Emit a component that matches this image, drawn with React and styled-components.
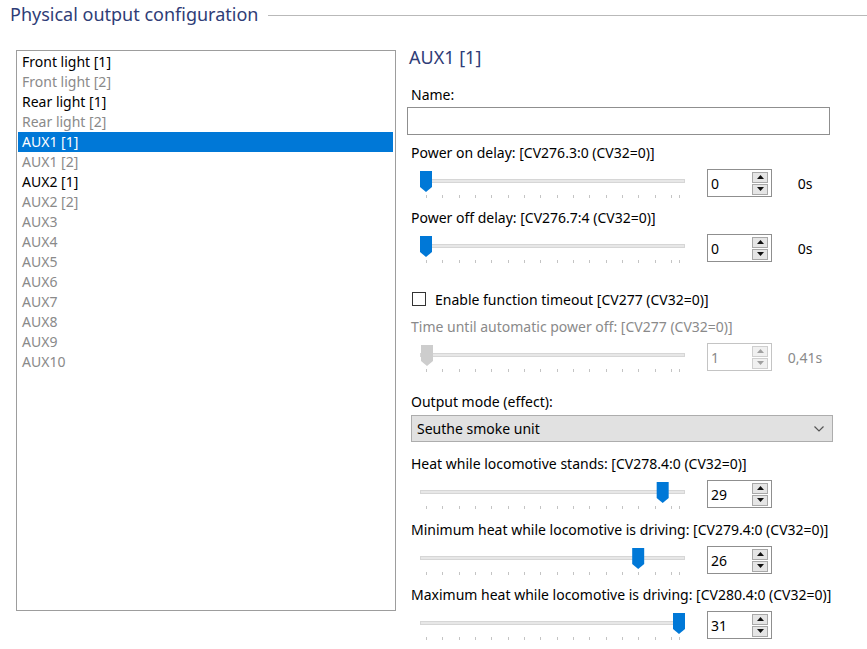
import React from 'react';
import styled, { createGlobalStyle } from 'styled-components';

const GlobalStyle = createGlobalStyle`
  html, body {
    margin: 0;
    padding: 0;
    background: #fff;
  }
  body {
    font-family: 'Noto Sans', 'Open Sans', sans-serif;
    font-size: 14px;
    color: #000;
  }
`;

const Page = styled.div`
  width: 867px;
  height: 649px;
  overflow: hidden;
`;

const TitleRow = styled.div`
  display: flex;
  align-items: center;
  height: 24px;
  padding: 2px 0 0 10px;
`;

const TitleText = styled.div`
  font-size: 18px;
  line-height: 24px;
  color: #2f3d77;
  white-space: nowrap;
`;

const TitleRule = styled.div`
  flex: 1;
  height: 1px;
  margin-left: 10px;
  margin-top: 2px;
  background: #b9b9b9;
`;

const Content = styled.div`
  display: flex;
  align-items: flex-start;
  margin-top: 20px;
  padding-left: 16px;
`;

const ListBox = styled.div`
  box-sizing: border-box;
  width: 380px;
  height: 561px;
  margin-top: 4px;
  border: 1px solid #9d9d9d;
  padding: 1px 2px 1px 1px;
`;

const ListItem = styled.div`
  height: 20px;
  line-height: 20px;
  padding-left: 4px;
  white-space: nowrap;
  color: ${(p) => (p.selected ? '#fff' : p.active ? '#000' : '#8a8a8a')};
  background: ${(p) => (p.selected ? '#0078d7' : 'transparent')};
`;

const Panel = styled.div`
  display: flex;
  flex-direction: column;
  margin-left: 11px;
  width: 440px;
`;

const Heading = styled.div`
  font-size: 18px;
  line-height: 22px;
  color: #2f3d77;
  padding-left: 2px;
`;

const Label = styled.div`
  line-height: 20px;
  height: 20px;
  padding-left: 4px;
  white-space: nowrap;
  margin-top: ${(p) => p.$mt || 0}px;
  color: ${(p) => (p.disabled ? '#8a8a8a' : '#000')};
`;

const TextInput = styled.div`
  box-sizing: border-box;
  width: 423px;
  height: 28px;
  margin-top: 2px;
  border: 1px solid #8f8f8f;
  background: #fff;
`;

const Row = styled.div`
  display: flex;
  align-items: center;
  height: 30px;
  margin-top: 5px;
  padding-left: 4px;
`;

const SliderSvg = styled.svg`
  display: block;
  flex: 0 0 284px;
`;

const Spin = styled.div`
  box-sizing: border-box;
  display: flex;
  align-items: center;
  justify-content: space-between;
  width: 65px;
  height: 28px;
  margin-left: 12px;
  border: 1px solid ${(p) => (p.disabled ? '#c4c4c4' : '#8f8f8f')};
  padding: 0 3px 0 3px;
  color: ${(p) => (p.disabled ? '#8a8a8a' : '#000')};
  background: #fff;
`;

const SpinButtons = styled.div`
  display: flex;
  flex-direction: column;
  gap: 1px;
`;

const SpinButton = styled.div`
  box-sizing: border-box;
  width: 16px;
  height: 11px;
  display: flex;
  align-items: center;
  justify-content: center;
  border: 1px solid ${(p) => (p.disabled ? '#cfcfcf' : '#a8a8a8')};
  background: ${(p) => (p.disabled ? '#f0f0f0' : '#e5e5e5')};
`;

const Unit = styled.div`
  width: 66px;
  text-align: center;
  color: ${(p) => (p.disabled ? '#8a8a8a' : '#000')};
`;

const CheckRow = styled.label`
  display: flex;
  align-items: center;
  height: 20px;
  margin-top: 26px;
  padding-left: 5px;
`;

const CheckBox = styled.span`
  box-sizing: border-box;
  width: 14px;
  height: 14px;
  border: 1px solid #333;
  background: #fff;
  margin-right: 9px;
`;

const Select = styled.div`
  box-sizing: border-box;
  display: flex;
  align-items: center;
  justify-content: space-between;
  width: 422px;
  height: 27px;
  margin: 3px 0 0 4px;
  padding: 0 8px 0 5px;
  border: 1px solid #adadad;
  background: #e1e1e1;
`;

const items = [
  ['Front light [1]', true],
  ['Front light [2]', false],
  ['Rear light [1]', true],
  ['Rear light [2]', false],
  ['AUX1 [1]', true, true],
  ['AUX1 [2]', false],
  ['AUX2 [1]', true],
  ['AUX2 [2]', false],
  ['AUX3', false],
  ['AUX4', false],
  ['AUX5', false],
  ['AUX6', false],
  ['AUX7', false],
  ['AUX8', false],
  ['AUX9', false],
  ['AUX10', false],
];

const ticks = [];
for (let i = 0; i <= 15; i++) ticks.push(15 + (i * 2 * 253) / 31);
ticks.push(268);

const Slider = ({ value, max = 31, disabled }) => {
  const cx = 15 + (value / max) * 253;
  const thumb = disabled ? '#cdcdcd' : '#0078d7';
  return (
    <SliderSvg width="284" height="30" viewBox="0 0 284 30">
      <rect x="9.5" y="11.5" width="264" height="3" fill="#e7e7e7" stroke="#d6d6d6" />
      {ticks.map((x, i) => (
        <line key={i} x1={Math.round(x) + 0.5} x2={Math.round(x) + 0.5} y1="27" y2="31" stroke="#c4c4c4" />
      ))}
      <polygon
        points={`${cx - 6},3 ${cx + 6},3 ${cx + 6},19 ${cx},24 ${cx - 6},19`}
        fill={thumb}
      />
    </SliderSvg>
  );
};

const Arrow = ({ up, disabled }) => (
  <svg width="7" height="4" viewBox="0 0 7 4">
    <polygon points={up ? '0,4 7,4 3.5,0' : '0,0 7,0 3.5,4'} fill={disabled ? '#a0a0a0' : '#111'} />
  </svg>
);

const SpinBox = ({ value, disabled }) => (
  <Spin disabled={disabled}>
    <span>{value}</span>
    <SpinButtons>
      <SpinButton disabled={disabled}>
        <Arrow up disabled={disabled} />
      </SpinButton>
      <SpinButton disabled={disabled}>
        <Arrow disabled={disabled} />
      </SpinButton>
    </SpinButtons>
  </Spin>
);

const SliderRow = ({ value, max, spin, unit, disabled }) => (
  <Row>
    <Slider value={value} max={max} disabled={disabled} />
    <SpinBox value={spin} disabled={disabled} />
    {unit && <Unit disabled={disabled}>{unit}</Unit>}
  </Row>
);

export default function App() {
  return (
    <Page>
      <GlobalStyle />
      <TitleRow>
        <TitleText>Physical output configuration</TitleText>
        <TitleRule />
      </TitleRow>
      <Content>
        <ListBox>
          {items.map(([name, active, selected]) => (
            <ListItem key={name} active={active} selected={selected}>
              {name}
            </ListItem>
          ))}
        </ListBox>
        <Panel>
          <Heading>AUX1 [1]</Heading>
          <Label $mt={17}>Name:</Label>
          <TextInput />
          <Label $mt={8}>Power on delay: [CV276.3:0 (CV32=0)]</Label>
          <SliderRow value={0} spin="0" unit="0s" />
          <Label $mt={10}>Power off delay: [CV276.7:4 (CV32=0)]</Label>
          <SliderRow value={0} spin="0" unit="0s" />
          <CheckRow>
            <CheckBox />
            Enable function timeout [CV277 (CV32=0)]
          </CheckRow>
          <Label $mt={8} disabled>
            Time until automatic power off: [CV277 (CV32=0)]
          </Label>
          <SliderRow value={1} max={255} spin="1" unit="0,41s" disabled />
          <Label $mt={20}>Output mode (effect):</Label>
          <Select>
            <span>Seuthe smoke unit</span>
            <svg width="10" height="6" viewBox="0 0 10 6">
              <polyline points="0.5,0.5 5,5 9.5,0.5" fill="none" stroke="#555" strokeWidth="1.2" />
            </svg>
          </Select>
          <Label $mt={12}>Heat while locomotive stands: [CV278.4:0 (CV32=0)]</Label>
          <SliderRow value={29} spin="29" />
          <Label $mt={11}>Minimum heat while locomotive is driving: [CV279.4:0 (CV32=0)]</Label>
          <SliderRow value={26} spin="26" />
          <Label $mt={10}>Maximum heat while locomotive is driving: [CV280.4:0 (CV32=0)]</Label>
          <SliderRow value={31} spin="31" />
        </Panel>
      </Content>
    </Page>
  );
}
